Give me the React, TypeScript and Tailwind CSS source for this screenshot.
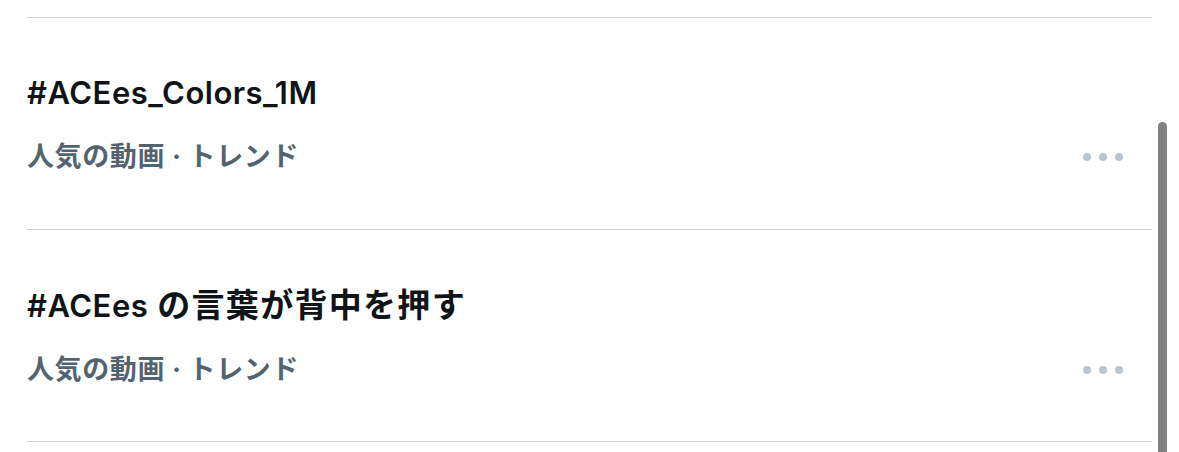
import { FC } from 'react';

interface TrendRowProps {
  title: string;
  meta: string;
}

// split a title into latin / japanese runs so the wider CJK setting can be matched
const splitRuns = (text: string) => text.match(/[\u3040-\u30ff\u4e00-\u9fff]+|[^\u3040-\u30ff\u4e00-\u9fff]+/g) ?? [text];
const isCjk = (run: string) => /[\u3040-\u30ff\u4e00-\u9fff]/.test(run);

const MoreDots: FC = () => (
  <div className="flex items-center gap-[8px] pr-[29px]">
    <span className="block h-[8px] w-[8px] rounded-full bg-[#b9c5d0]" />
    <span className="block h-[8px] w-[8px] rounded-full bg-[#b9c5d0]" />
    <span className="block h-[8px] w-[8px] rounded-full bg-[#b9c5d0]" />
  </div>
);

const TrendRow: FC<TrendRowProps> = ({ title, meta }) => {
  return (
    <div className="h-[212px] border-t border-[#d1d1d1] pt-[55px]">
      <h3 className="text-[31px] font-semibold leading-[40px] tracking-[0.5px] text-[#0f1419]">
        {splitRuns(title).map((run, i) =>
          isCjk(run) ? (
            <span key={i} className={i > 0 ? 'pl-[9px] text-[33px] tracking-[1.3px]' : 'text-[33px] tracking-[1.3px]'}>
              {run}
            </span>
          ) : (
            <span key={i}>{run}</span>
          )
        )}
      </h3>
      <div className="mt-[28px] flex items-center justify-between">
        <p className="text-[27px] font-bold leading-[32px] tracking-[0.6px] text-[#536471]">{meta}</p>
        <MoreDots />
      </div>
    </div>
  );
};

const App: FC = () => {
  return (
    <div
      className="relative h-[452px] w-[1179px] overflow-hidden bg-white"
      style={{ fontFamily: 'Inter, "Noto Sans CJK JP", sans-serif' }}
    >
      <div className="w-[1152px] pl-[27px] pt-[17px]">
        <TrendRow title="#ACEes_Colors_1M" meta="人気の動画 · トレンド" />
        <TrendRow title="#ACEesの言葉が背中を押す" meta="人気の動画 · トレンド" />
        <div className="border-t border-[#d1d1d1]" />
      </div>
      {/* scrollbar thumb */}
      <div className="absolute right-[12px] top-[122px] h-[340px] w-[9px] rounded-full bg-[#808080]" />
    </div>
  );
};

export default App;
